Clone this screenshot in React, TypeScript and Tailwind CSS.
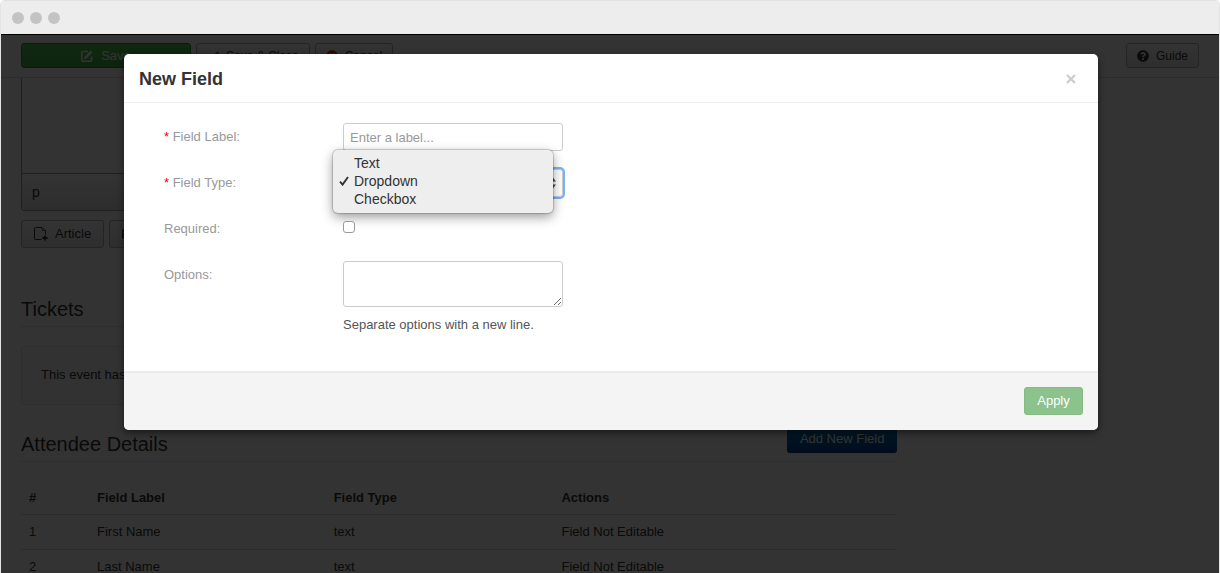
import type { ReactNode } from 'react';
import { FaCheck, FaImage, FaQuestionCircle, FaTimesCircle } from 'react-icons/fa';

const attendeeFields = [
  { id: 1, label: "First Name", type: "text", action: "Field Not Editable" },
  { id: 2, label: "Last Name", type: "text", action: "Field Not Editable" },
];

const fieldTypes = ["Text", "Dropdown", "Checkbox"];

const grayButton =
  "flex items-center gap-[7px] rounded-[3px] border border-[#b3b3b3] bg-linear-to-b from-white to-[#e6e6e6] text-[#333]";

function SaveIcon() {
  return (
    <svg width="12" height="12" viewBox="0 0 12 12" fill="none" stroke="currentColor" strokeWidth="1.5">
      <path d="M7 1.5H1.5a.7.7 0 0 0-.7.7v8.3a.7.7 0 0 0 .7.7h8.3a.7.7 0 0 0 .7-.7V6.5" />
      <path d="M4.6 7.6 10.6 1.4" strokeWidth="2.6" />
      <path d="M3 9.2 3.7 6.6 5.6 8.5z" fill="currentColor" stroke="none" />
    </svg>
  );
}

function ArticleIcon() {
  return (
    <svg width="14" height="14" viewBox="0 0 14 14" fill="none" stroke="currentColor" strokeWidth="1">
      <path d="M7.5 12.5H1.5a1 1 0 0 1-1-1V1.5a1 1 0 0 1 1-1H8L11.5 4v3.5" />
      <path d="M8 .5V3.5h3.5" strokeWidth="0.6" />
      <path d="M11 8.4v5.2M8.4 11h5.2" strokeWidth="1.8" />
    </svg>
  );
}

function Toolbar() {
  return (
    <div className="flex h-[43px] items-start gap-[5px] border-b border-[#d9d9d9] px-5 pt-2 text-[12px] leading-[18px]">
      <button className="flex h-[25px] w-[170px] items-center justify-center gap-2 rounded-[3px] border border-[#2f8a2f] bg-linear-to-b from-[#50c850] to-[#46b046] text-[13px] text-white">
        <SaveIcon />
        Save
      </button>
      <button className={`${grayButton} h-[25px] px-[10px]`}>
        <FaCheck size={12} className="text-[#378137]" />
        Save & Close
      </button>
      <button className={`${grayButton} h-[25px] px-[10px]`}>
        <FaTimesCircle size={12} className="text-[#d8281f]" />
        Cancel
      </button>
      <button className={`${grayButton} ml-auto h-[25px] px-[10px]`}>
        <FaQuestionCircle size={12} />
        Guide
      </button>
    </div>
  );
}

function EventPage() {
  return (
    <div className="px-5">
      <div className="w-[74.4%]">
        {/* Editor */}
        <div className="rounded-b-[3px] border border-t-0 border-[#9b9b9b]">
          <div className="h-[95px]" />
          <div className="flex h-[37px] items-center border-t border-[#9b9b9b] bg-linear-to-b from-white to-[#e0e0e0] px-[10px] text-[14px] text-[#333]">
            p
          </div>
        </div>
        <div className="flex gap-[5px] pt-[9px] text-[13px] leading-[18px]">
          <button className={`${grayButton} h-7 px-3`}>
            <ArticleIcon />
            Article
          </button>
          <button aria-label="Image" className={`${grayButton} h-7 w-20 px-3`}>
            <FaImage size={12} />
          </button>
        </div>

        {/* Tickets */}
        <h3 className="mt-12 border-b border-[#e5e5e5] pb-1 text-[20px] leading-[26px] text-[#333]">Tickets</h3>
        <div className="mt-[19px] rounded-[3px] border border-[#e3e3e3] bg-[#f9f9f9] px-[19px] pt-[19px] pb-5 text-[13px] leading-[18px] text-[#333]">
          This event has
        </div>

        {/* Attendee details */}
        <div className="mt-5 flex h-[37px] items-end justify-between border-b border-[#e5e5e5] pb-1">
          <h3 className="text-[20px] leading-[26px] text-[#333]">Attendee Details</h3>
          <button className="mb-1 h-7 rounded-[3px] bg-linear-to-b from-[#0088cc] to-[#003a8a] px-[13px] text-[13px] text-white">
            Add New Field
          </button>
        </div>
        <table className="mt-[18px] w-full table-fixed text-left text-[13px] leading-[18px] text-[#333]">
          <thead>
            <tr className="h-[34px]">
              <th className="w-[68px] px-2 pt-[2px]">#</th>
              <th className="w-[27%] px-2 pt-[2px]">Field Label</th>
              <th className="w-[26%] px-2 pt-[2px]">Field Type</th>
              <th className="px-2 pt-[2px]">Actions</th>
            </tr>
          </thead>
          <tbody>
            {attendeeFields.map((field) => (
              <tr key={field.id} className="h-[35px] border-t border-[#ddd]">
                <td className="px-2">{field.id}</td>
                <td className="px-2">{field.label}</td>
                <td className="px-2">{field.type}</td>
                <td className="px-2">{field.action}</td>
              </tr>
            ))}
          </tbody>
        </table>
      </div>
    </div>
  );
}

type FormRowProps = { id: string; label: string; required?: boolean; children: ReactNode };

function FormRow({ id, label, required, children }: FormRowProps) {
  return (
    <div className="flex min-h-7 items-start">
      <label htmlFor={id} className="w-[179px] pt-[5px] leading-[18px] text-[#999]">
        {required && <span className="text-[#f00]">* </span>}
        {label}
      </label>
      <div className="relative w-[220px]">{children}</div>
    </div>
  );
}

function FieldTypeMenu() {
  return (
    <ul
      role="listbox"
      aria-label="Field Type"
      className="absolute -top-[19px] -left-[10px] w-[220px] rounded-[5px] bg-[#eee] pt-1 pb-[5px] text-[14px] leading-[18px] text-[#333] shadow-[0_0_1px_1px_rgba(0,0,0,0.18),0_4px_12px_rgba(0,0,0,0.4)]"
    >
      {fieldTypes.map((type) => (
        <li key={type} role="option" aria-selected={type === "Dropdown"} className="flex items-center">
          <span className="flex w-[21px] justify-center">
            {type === "Dropdown" && (
              <svg width="10" height="10" viewBox="0 0 10 10" fill="none" stroke="currentColor" strokeWidth="1.9">
                <path d="M1 5.6 3.6 8.6 9 1" />
              </svg>
            )}
          </span>
          {type}
        </li>
      ))}
    </ul>
  );
}

function NewFieldModal() {
  return (
    <div
      role="dialog"
      aria-labelledby="modal-title"
      className="mt-[19px] mr-[121px] ml-[123px] rounded-[5px] bg-white text-[13px] leading-[18px] shadow-[0_3px_7px_rgba(0,0,0,0.5)]"
    >
      <div className="flex h-[49px] items-center justify-between border-b border-[#eee] pt-[2px] pr-[21px] pl-[15px]">
        <h3 id="modal-title" className="text-[18px] leading-6 font-bold text-[#333]">New Field</h3>
        <button aria-label="Close" className="text-[#ccc]">
          <svg width="12" height="12" viewBox="0 0 12 12" stroke="currentColor" strokeWidth="2.2">
            <path d="M2 2l8 8M10 2l-8 8" />
          </svg>
        </button>
      </div>

      <div className="flex flex-col gap-[18px] px-10 pt-5 pb-[37px]">
        <FormRow id="field-label" label="Field Label:" required>
          <input
            id="field-label"
            type="text"
            placeholder="Enter a label..."
            className="block h-7 w-full rounded-[3px] border border-[#ccc] px-[6px] placeholder:text-[#999]"
          />
        </FormRow>
        <FormRow id="field-type" label="Field Type:" required>
          <select
            id="field-type"
            defaultValue="Dropdown"
            className="block h-7 w-full appearance-none rounded-[3px] border border-[#ccc] bg-white px-[10px] text-[#555] shadow-[0_0_0_2px_#78b4f8]"
          >
            {fieldTypes.map((type) => (
              <option key={type}>{type}</option>
            ))}
          </select>
          <svg className="absolute top-2 right-[7px]" width="7" height="12" viewBox="0 0 7 12" fill="#444">
            <path d="M3.5 0 7 4.5H0zM3.5 12 0 7.5h7z" />
          </svg>
          <FieldTypeMenu />
        </FormRow>
        <FormRow id="field-required" label="Required:">
          <input
            id="field-required"
            type="checkbox"
            className="mt-[6px] block size-3 appearance-none rounded-[3px] border border-[#999] bg-white"
          />
        </FormRow>
        <FormRow id="field-options" label="Options:">
          <textarea id="field-options" className="block h-[46px] w-full rounded-[3px] border border-[#ccc]" />
          <p className="mt-[9px] text-[#555]">Separate options with a new line.</p>
        </FormRow>
      </div>

      <div className="flex h-[59px] items-center justify-end rounded-b-[5px] border-t-2 border-[#eaeaea] bg-[#f4f4f4] px-[15px] pb-[2px]">
        <button className="h-7 w-[59px] rounded-[3px] border border-[#84bb84] bg-[#8cc28c] text-white">Apply</button>
      </div>
    </div>
  );
}

export default function App() {
  return (
    <div className="flex h-screen flex-col overflow-hidden rounded-t-[5px] border border-b-0 border-[#e3e3e3] bg-white font-['Liberation_Sans',Arial,sans-serif]">
      <div className="flex h-[34px] shrink-0 items-center gap-[6px] border-b border-black bg-[#ededed] px-[11px]">
        <span className="size-3 rounded-full bg-[#c5c2c3]" />
        <span className="size-3 rounded-full bg-[#c5c2c3]" />
        <span className="size-3 rounded-full bg-[#c5c2c3]" />
      </div>
      <div className="relative grow">
        <Toolbar />
        <EventPage />
        {/* Backdrop */}
        <div className="absolute inset-0 flow-root bg-black/80">
          <NewFieldModal />
        </div>
      </div>
    </div>
  );
}
